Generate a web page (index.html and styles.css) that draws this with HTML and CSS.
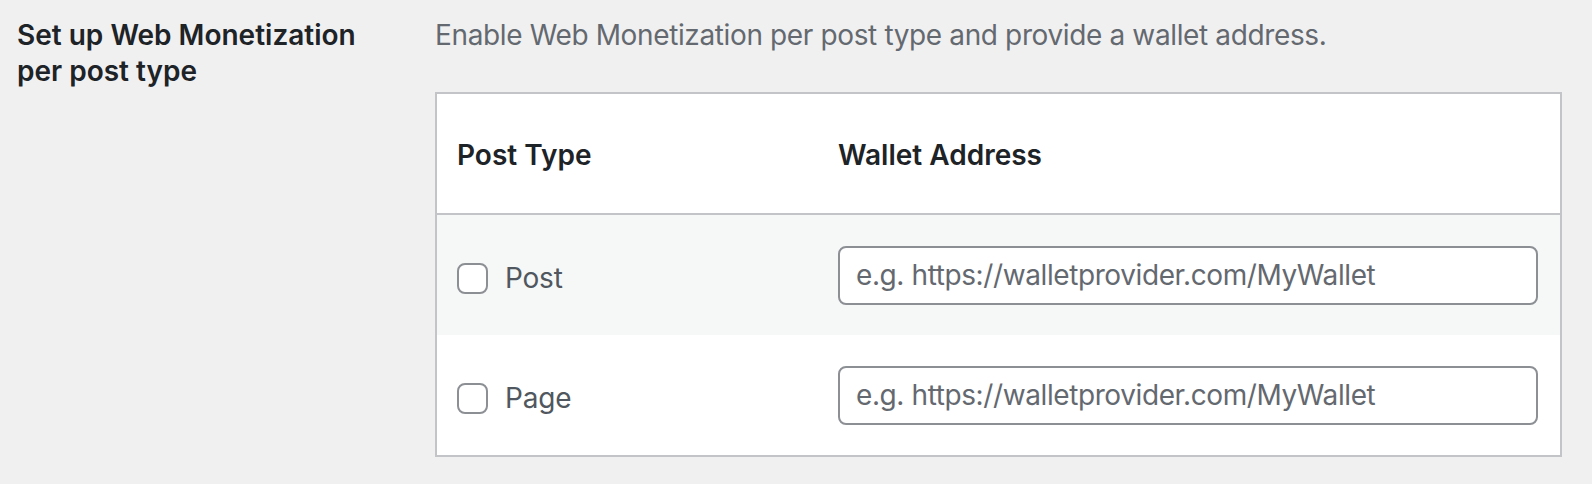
FILE: index.html
```html
<!DOCTYPE html>
<html lang="en">
<head>
<meta charset="utf-8">
<title>Web Monetization settings</title>
<link rel="stylesheet" href="styles.css">
</head>
<body>
<div class="setting">
  <div class="setting-label">Set up Web Monetization per post type</div>
  <div class="setting-field">
    <p class="description">Enable Web Monetization per post type and provide a wallet address.</p>
    <div class="pt-table">
      <div class="pt-head">
        <div class="pt-cell">Post Type</div>
        <div class="pt-cell pt-cell-wallet">Wallet Address</div>
      </div>
      <div class="pt-row pt-row-alt">
        <label class="pt-cell pt-check"><input type="checkbox" class="checkbox"><span>Post</span></label>
        <div class="pt-cell pt-cell-wallet"><input type="text" class="wallet-input" placeholder="e.g. https://walletprovider.com/MyWallet"></div>
      </div>
      <div class="pt-row">
        <label class="pt-cell pt-check"><input type="checkbox" class="checkbox"><span>Page</span></label>
        <div class="pt-cell pt-cell-wallet"><input type="text" class="wallet-input" placeholder="e.g. https://walletprovider.com/MyWallet"></div>
      </div>
    </div>
  </div>
</div>
</body>
</html>
```
FILE: styles.css
```css
* { box-sizing: border-box; }

html, body {
  margin: 0;
  padding: 0;
  background: #f0f0f1;
  font-family: Inter, "Noto Sans", "Liberation Sans", sans-serif;
  font-size: 28px;
  line-height: 36px;
  color: #1d2327;
}

.setting {
  display: flex;
  padding: 17px 30px 0 17px;
}

.setting-label {
  width: 418px;
  flex: none;
  font-weight: 600;
  padding-right: 40px;
}

.setting-field {
  flex: 1;
  min-width: 0;
}

.description {
  margin: 0 0 39px;
  color: #646970;
  letter-spacing: -0.37px;
}

.pt-table {
  background: #fff;
  border: 2px solid #c3c4c7;
}

.pt-head,
.pt-row {
  display: grid;
  grid-template-columns: 380px 1fr;
  align-items: center;
}

.pt-head {
  height: 121px;
  padding-top: 2px;
  border-bottom: 2px solid #c3c4c7;
  font-weight: 600;
  color: #1d2327;
}

.pt-row {
  height: 120px;
}

.pt-row-alt {
  background: #f6f7f7;
}

.pt-cell {
  padding-left: 20px;
}

.pt-cell-wallet {
  padding-left: 21px;
  padding-right: 22px;
}

.pt-check {
  display: flex;
  align-items: center;
  gap: 17px;
  padding-top: 6px;
  color: #50575e;
  letter-spacing: -0.2px;
}

.checkbox {
  appearance: none;
  -webkit-appearance: none;
  margin: 0;
  width: 31px;
  height: 31px;
  border: 2px solid #8c8f94;
  border-radius: 8px;
  background: #fff;
  flex: none;
}

.wallet-input {
  display: block;
  width: 100%;
  height: 59px;
  margin: 0;
  padding: 0 16px;
  border: 2px solid #8c8f94;
  border-radius: 8px;
  background: #fff;
  font: inherit;
  letter-spacing: -0.4px;
  color: #2c3338;
}

.wallet-input::placeholder {
  color: #646970;
  opacity: 1;
}
```
